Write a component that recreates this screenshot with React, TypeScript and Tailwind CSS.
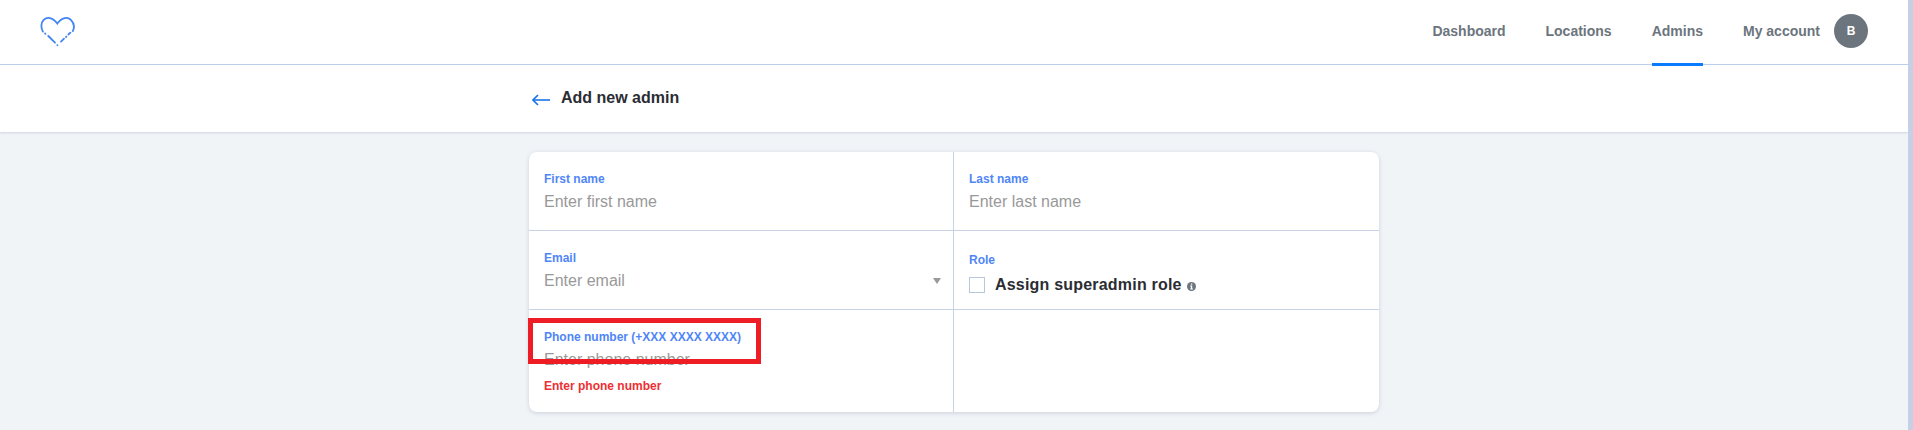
import React from "react";

function Logo() {
  return (
    <svg width="36" height="31" viewBox="40 15 36 31" fill="none" stroke="#4285f4" strokeWidth="1.8" strokeLinecap="round">
      <path d="M42.9 30.6C40.6 26.6 41 21.5 43.7 18.8C46.9 15.6 52.9 16 57.3 22.6C61.7 16 67.7 15.6 70.9 18.8C74 21.9 74.6 26.4 72.8 30" />
      <path d="M45 32.4L45.4 32.8" />
      <path d="M48.3 35L55 41.7" />
      <path d="M57.3 44.1L57.4 44.2" />
      <path d="M61 40.7L64 37.7" />
      <path d="M66 36L66.4 35.6" />
      <path d="M68.3 33.5L70.4 31.6" />
    </svg>
  );
}

function NavItem({ label, active }: { label: string; active?: boolean }) {
  return (
    <a className="relative flex h-[62px] items-center text-[14px] font-bold text-[#6c757d]">
      {label}
      {active && <span className="absolute bottom-[-4px] left-0 right-0 h-[3px] bg-[#0a7bff]" />}
    </a>
  );
}

function Label({ children }: { children: React.ReactNode }) {
  return <div className="text-[12px] font-bold leading-[14px] text-[#4f86f7]">{children}</div>;
}

function Placeholder({ children }: { children: React.ReactNode }) {
  return <div className="mt-[4px] text-[16px] leading-[24px] text-[#999999]">{children}</div>;
}

export default function App() {
  return (
    <div className="flex h-[430px] w-[1913px] overflow-hidden font-['Liberation_Sans',Arial,sans-serif]">
      <div className="flex w-[1908px] flex-col bg-[#f1f4f7]">
        <header className="flex h-[65px] items-center justify-between border-b border-[#bfd0ea] bg-white pb-[2px] pl-[40px] pr-[40px]">
          <Logo />
          <nav className="flex items-center">
            <div className="flex gap-[40px]">
              <NavItem label="Dashboard" />
              <NavItem label="Locations" />
              <NavItem label="Admins" active />
              <NavItem label="My account" />
            </div>
            <div className="ml-[14px] flex h-[34px] w-[34px] items-center justify-center rounded-full bg-[#6c757d] text-[12px] font-bold text-white">
              B
            </div>
          </nav>
        </header>

        <div className="h-[67px] bg-white shadow-[0_1px_2px_rgba(140,155,180,0.35)]">
          <div className="mx-auto flex h-full w-[850px] items-center pb-[1px] pl-[3px]">
            <svg width="18" height="12" viewBox="0 0 18 12" fill="none" stroke="#1a73e8" strokeWidth="1.6" className="mt-[3px]">
              <path d="M18 6H1" />
              <path d="M6 1L1 6L6 11" />
            </svg>
            <h1 className="ml-[11px] text-[16px] font-bold text-[#2b2d33]">Add new admin</h1>
          </div>
        </div>

        <main className="mx-auto mt-[20px] grid h-[260px] w-[850px] grid-cols-2 grid-rows-[79px_79px_102px] rounded-[8px] bg-white shadow-[0_1px_4px_rgba(140,155,180,0.4)]">
          <div className="border-b border-r border-[#c8d3e8] px-[15px] pt-[20px]">
            <Label>First name</Label>
            <Placeholder>Enter first name</Placeholder>
          </div>
          <div className="border-b border-[#c8d3e8] px-[15px] pt-[20px]">
            <Label>Last name</Label>
            <Placeholder>Enter last name</Placeholder>
          </div>
          <div className="relative border-b border-r border-[#c8d3e8] px-[15px] pt-[20px]">
            <Label>Email</Label>
            <Placeholder>Enter email</Placeholder>
            <span className="absolute left-[404px] top-[47px] h-0 w-0 border-x-[4px] border-t-[6px] border-x-transparent border-t-[#999999]" />
          </div>
          <div className="border-b border-[#c8d3e8] px-[15px] pt-[22px]">
            <Label>Role</Label>
            <div className="mt-[9px] flex items-center">
              <span className="h-[16px] w-[16px] border border-[#b8c6df] bg-white" />
              <span className="ml-[10px] text-[16px] font-bold leading-[18px] tracking-[0.2px] text-[#2b2d33]">Assign superadmin role</span>
              <svg width="9" height="9" viewBox="0 0 9 9" className="ml-[5px] mt-[3px]">
                <circle cx="4.5" cy="4.5" r="4.5" fill="#6c757d" />
                <rect x="3.9" y="1.5" width="1.4" height="1.2" fill="#fff" />
                <path d="M3.2 3.6H5.2V6.5H5.9V7.4H3.2V6.5H3.9V4.4H3.2Z" fill="#fff" />
              </svg>
            </div>
          </div>
          <div className="relative border-r border-[#c8d3e8] px-[15px] pt-[20px]">
            <Label>Phone number (+XXX XXXX XXXX)</Label>
            <Placeholder>Enter phone number</Placeholder>
            <div className="mt-[7px] text-[12px] font-bold leading-[14px] text-[#ee2f33]">Enter phone number</div>
            <div className="absolute left-[-1px] top-[8px] h-[46px] w-[233px] border-[5px] border-[#ee1c25]" />
          </div>
          <div />
        </main>
      </div>
      <div className="w-[5px] bg-[#c5d0e6]" />
    </div>
  );
}
